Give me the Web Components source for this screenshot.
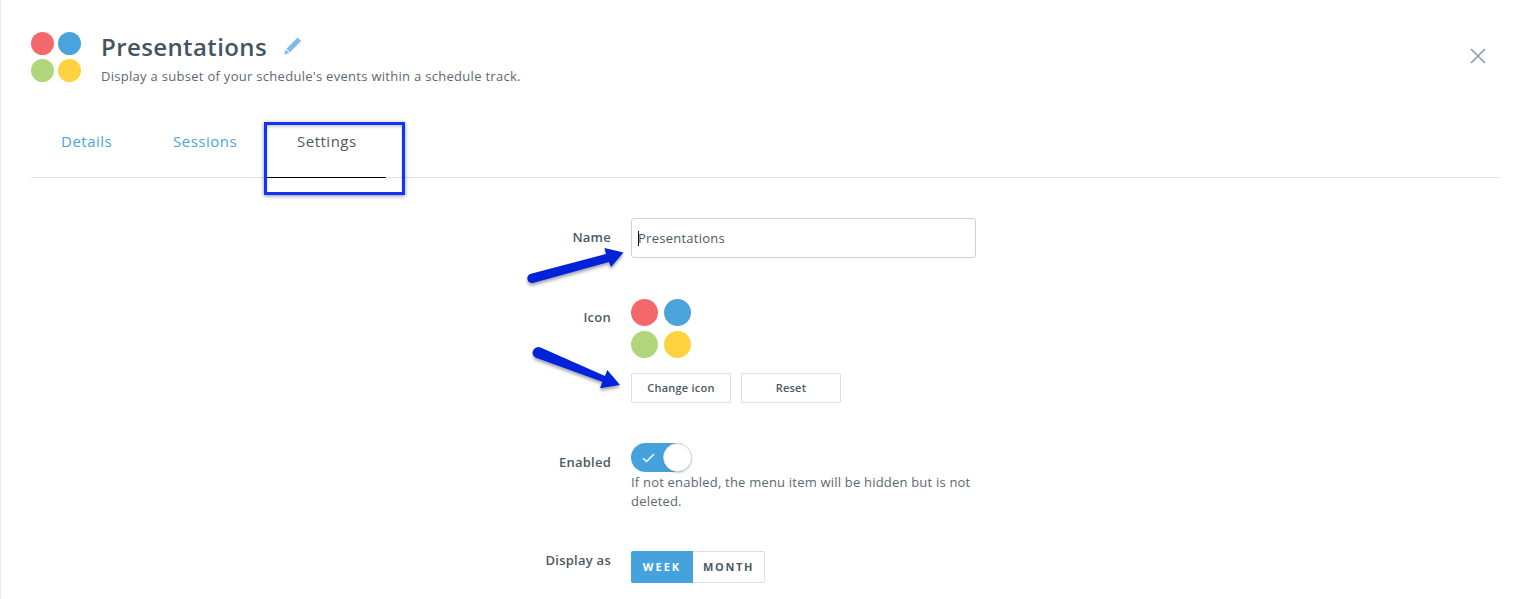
<!DOCTYPE html>
<html lang="en">
<head>
<meta charset="utf-8">
<title>Presentations</title>
<style>
  html, body { margin: 0; height: 599px; overflow: hidden; background: #fff; }
  body { font-family: "Open Sans", "Liberation Sans", sans-serif; color: #4b5a66; }
</style>
</head>
<body>
<settings-page>
  <page-header slot="header" title="Presentations" subtitle="Display a subset of your schedule's events within a schedule track."></page-header>
  <tab-bar slot="tabs">
    <tab-item style="--tab-w: 111px; --tab-pad: 29px">Details</tab-item>
    <tab-item style="--tab-w: 124px">Sessions</tab-item>
    <tab-item style="--tab-w: 119px" active>Settings</tab-item>
  </tab-bar>
  <form-row label="Name" style="--row-top: 40px">
    <name-input value="Presentations"></name-input>
  </form-row>
  <form-row label="Icon" style="--row-top: 41px; --label-top: 9px">
    <icon-picker></icon-picker>
  </form-row>
  <form-row label="Enabled" style="--row-top: 40px; --label-top: 10px">
    <enable-toggle>If not enabled, the menu item will be hidden but is not deleted.</enable-toggle>
  </form-row>
  <form-row label="Display as" style="--row-top: 40px; --label-top: 0px">
    <segment-switch></segment-switch>
  </form-row>
  <note-arrows slot="overlay"></note-arrows>
</settings-page>

<script>
// circulos del logo, se usan en la cabecera y en el selector de icono
function dotsMarkup(size, gapX, gapY) {
  const colors = ['#f4686b', '#4aa3dd', '#b1d57b', '#ffd23f']
  const dots = colors.map(c => `<i style="width:${size}px;height:${size}px;border-radius:50%;background:${c};display:block"></i>`).join('')
  return `<div style="display:grid;grid-template-columns:${size}px ${size}px;column-gap:${gapX}px;row-gap:${gapY}px">${dots}</div>`
}

class SettingsPage extends HTMLElement {
  constructor() {
    super()
    this.attachShadow({ mode: 'open' })
    this.shadowRoot.innerHTML = `
      <style>
        :host { display: block; position: relative; height: 599px; overflow: hidden; box-sizing: border-box; border-left: 1px solid #e9edf0; }
      </style>
      <slot name="header"></slot>
      <slot name="tabs"></slot>
      <slot></slot>
      <slot name="overlay"></slot>`
  }
}

class PageHeader extends HTMLElement {
  constructor() {
    super()
    this.attachShadow({ mode: 'open' })
    this.shadowRoot.innerHTML = `
      <style>
        :host { display: flex; padding: 32px 41px 0 30px; height: 50px; }
        .text { margin-left: 20px; flex: 1; }
        .title-line { display: flex; align-items: center; height: 30px; }
        h1 { margin: 0; font-size: 24px; line-height: 30px; font-weight: 600; color: #46545f; letter-spacing: .4px; }
        svg.pen { margin-left: 17px; margin-top: -2px; }
        p { margin: 5px 0 0; font-size: 13px; line-height: 18px; color: #5b6873; letter-spacing: .29px; }
        svg.close { margin-top: 16px; }
      </style>
      ${dotsMarkup(23, 4, 4)}
      <div class="text">
        <div class="title-line">
          <h1></h1>
          <svg class="pen" width="18" height="18" viewBox="0 0 18 18"><path d="M13.6.6l3.6 3.4L6 15.2l-3.6-3.4zM1.7 12.6l3.5 3.3-4.900 1.500z" fill="#7dbbe9"/></svg>
        </div>
        <p></p>
      </div>
      <svg class="close" width="16" height="16" viewBox="0 0 16 16"><path d="M1 1l14 14M15 1L1 15" stroke="#8c9ba8" stroke-width="1.6" fill="none"/></svg>`
    this.shadowRoot.querySelector('h1').textContent = this.getAttribute('title')
    this.shadowRoot.querySelector('p').textContent = this.getAttribute('subtitle')
  }
}

class TabBar extends HTMLElement {
  constructor() {
    super()
    this.attachShadow({ mode: 'open' })
    this.shadowRoot.innerHTML = `
      <style>
        :host { display: flex; box-sizing: border-box; margin: 41px 27px 0 30px; height: 55px; border-bottom: 1px solid #dfe3e6; }
      </style>
      <slot></slot>`
  }
}

class TabItem extends HTMLElement {
  constructor() {
    super()
    this.attachShadow({ mode: 'open' })
    this.shadowRoot.innerHTML = `
      <style>
        :host { display: block; position: relative; box-sizing: border-box; width: var(--tab-w); height: 55px; padding: 7px 0 0 var(--tab-pad, 30px); font-size: 15px; line-height: 22px; color: #4aa3dd; letter-spacing: .5px; }
        :host([active]) { color: #4b5a66; }
        :host(:first-child) { margin-left: 1px; }
        .line { display: none; position: absolute; left: 0; right: 0; bottom: 0; height: 1px; background: #000; }
        :host([active]) .line { display: block; }
        .mark { display: none; position: absolute; left: -3px; right: -19px; top: -1px; bottom: -17px; border: 3px solid #0f35f2; box-shadow: 0 1px 4px rgba(0,0,0,.45), inset 0 2px 3px rgba(0,0,0,.2); }
        :host([active]) .mark { display: block; }
      </style>
      <slot></slot><div class="line"></div><div class="mark"></div>`
  }
}

class FormRow extends HTMLElement {
  constructor() {
    super()
    this.attachShadow({ mode: 'open' })
    this.shadowRoot.innerHTML = `
      <style>
        :host { display: grid; grid-template-columns: 610px auto; column-gap: 20px; margin-top: var(--row-top, 0); }
        label { text-align: right; font-size: 13px; line-height: 18px; font-weight: 600; color: #4b5a66; letter-spacing: .25px; padding-top: var(--label-top, 10px); }
      </style>
      <label></label>
      <div><slot></slot></div>`
    this.shadowRoot.querySelector('label').textContent = this.getAttribute('label')
  }
}

class NameInput extends HTMLElement {
  constructor() {
    super()
    this.attachShadow({ mode: 'open' })
    this.shadowRoot.innerHTML = `
      <style>
        :host { display: flex; align-items: center; box-sizing: border-box; width: 345px; height: 40px; padding-left: 6px; border: 1px solid #ccd3da; border-radius: 3px; font-size: 13px; color: #4b5a66; letter-spacing: .25px; }
        i { width: 1px; height: 15px; background: #111; }
        span { margin-left: -1px; }
      </style>
      <i></i><span></span>`
    this.shadowRoot.querySelector('span').textContent = this.getAttribute('value')
  }
}

class IconPicker extends HTMLElement {
  constructor() {
    super()
    this.attachShadow({ mode: 'open' })
    this.shadowRoot.innerHTML = `
      <style>
        :host { display: block; }
        .buttons { display: flex; gap: 10px; margin-top: 15px; }
        button { box-sizing: border-box; width: 100px; height: 30px; padding: 0 0 2px; background: #fff; border: 1px solid #dcdfe3; border-radius: 2px; font: 600 11px "Open Sans", sans-serif; color: #4b5a66; letter-spacing: .25px; }
      </style>
      ${dotsMarkup(27, 6, 5)}
      <div class="buttons"><button>Change icon</button><button>Reset</button></div>`
  }
}

class EnableToggle extends HTMLElement {
  constructor() {
    super()
    this.attachShadow({ mode: 'open' })
    this.shadowRoot.innerHTML = `
      <style>
        :host { display: block; width: 350px; }
        .track { position: relative; display: flex; align-items: center; width: 60px; height: 29px; border-radius: 15px; background: #45a2dc; padding-left: 11px; box-sizing: border-box; }
        .knob { position: absolute; top: 0; right: -1px; width: 29px; height: 29px; box-sizing: border-box; border-radius: 50%; background: #fff; border: 1px solid #d5dade; box-shadow: 0 1px 2px rgba(0,0,0,.2); }
        .help { font-size: 13px; line-height: 19px; color: #5b6873; letter-spacing: .2px; margin-top: 1px; }
      </style>
      <div class="track">
        <svg width="13" height="10" viewBox="0 0 13 10"><path d="M1 5.2l3.6 3.4L12 1" fill="none" stroke="#fff" stroke-width="1.4"/></svg>
        <div class="knob"></div>
      </div>
      <div class="help"><slot></slot></div>`
  }
}

class SegmentSwitch extends HTMLElement {
  constructor() {
    super()
    this.attachShadow({ mode: 'open' })
    this.shadowRoot.innerHTML = `
      <style>
        :host { display: inline-flex; height: 32px; font-size: 11px; font-weight: 700; letter-spacing: 1.6px; }
        div { display: flex; align-items: center; justify-content: center; box-sizing: border-box; padding-bottom: 2px; }
        .on { width: 62px; background: #45a2dc; color: #fff; border-radius: 2px 0 0 2px; letter-spacing: 2px; }
        .off { width: 72px; background: #fff; color: #4b5a66; border: 1px solid #dcdfe3; border-left: 0; border-radius: 0 2px 2px 0; }
      </style>
      <div class="on">WEEK</div><div class="off">MONTH</div>`
  }
}

// flechas de anotacion, van encima del formulario
class NoteArrows extends HTMLElement {
  constructor() {
    super()
    this.attachShadow({ mode: 'open' })
    this.shadowRoot.innerHTML = `
      <style>
        :host { display: block; position: absolute; left: -1px; top: 0; width: 1527px; height: 599px; pointer-events: none; }
      </style>
      <svg width="1527" height="599" viewBox="0 0 1527 599">
        <defs><filter id="s" x="-20%" y="-20%" width="140%" height="160%"><feDropShadow dx="0" dy="2.500" stdDeviation="1.800" flood-color="#000" flood-opacity=".35"/></filter></defs>
        <g filter="url(#s)" fill="#0524d8">
          <path d="M531 273.800L606 254L604.500 248L623.500 252.500L611 267L609 262L533 283A4.700 4.700 0 0 1 531 273.800Z"/>
          <path d="M540.500 347.500L605 376L607.300 370L620 385L600 388.300L602.300 381.700L536 357.800A5.500 5.500 0 0 1 540.500 347.500Z"/>
        </g>
      </svg>`
  }
}

customElements.define('settings-page', SettingsPage)
customElements.define('page-header', PageHeader)
customElements.define('tab-bar', TabBar)
customElements.define('tab-item', TabItem)
customElements.define('form-row', FormRow)
customElements.define('name-input', NameInput)
customElements.define('icon-picker', IconPicker)
customElements.define('enable-toggle', EnableToggle)
customElements.define('segment-switch', SegmentSwitch)
customElements.define('note-arrows', NoteArrows)
</script>
</body>
</html>
